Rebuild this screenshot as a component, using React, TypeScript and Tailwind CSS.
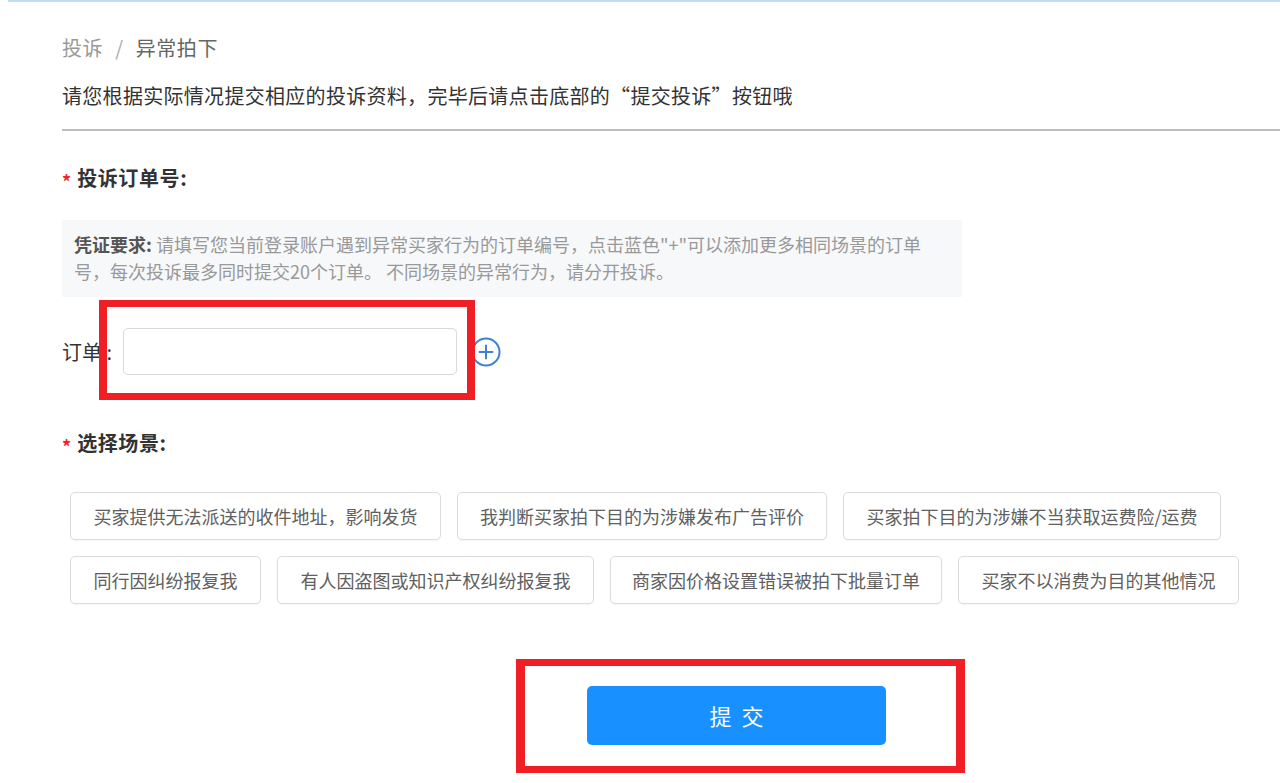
const scenes: { label: string; width: string }[] = [
  { label: "买家提供无法派送的收件地址，影响发货", width: "w-[371px]" },
  { label: "我判断买家拍下目的为涉嫌发布广告评价", width: "w-[370px]" },
  { label: "买家拍下目的为涉嫌不当获取运费险/运费", width: "w-[378px]" },
  { label: "同行因纠纷报复我", width: "w-[191px]" },
  { label: "有人因盗图或知识产权纠纷报复我", width: "w-[317px]" },
  { label: "商家因价格设置错误被拍下批量订单", width: "w-[332px]" },
  { label: "买家不以消费为目的其他情况", width: "w-[281px]" },
];

function FieldLabel({ text }: { text: string }) {
  return (
    <div className="flex h-[28px] items-center">
      <span className="mr-[6px] mt-[5px] text-[18px] font-bold leading-none text-[#f5222d]">*</span>
      <span className="text-[20px] font-bold tracking-[0.6px] text-[#333]">{text}</span>
    </div>
  );
}

function PlusCircle() {
  return (
    <svg width="30" height="30" viewBox="0 0 30 30" fill="none">
      <circle cx="15" cy="15" r="13.5" stroke="#3f82d2" strokeWidth="2" />
      <path d="M15 8.5v13M8.5 15h13" stroke="#3f82d2" strokeWidth="2" strokeLinecap="round" />
    </svg>
  );
}

export default function App() {
  return (
    <div
      className="relative h-[783px] w-[1280px] overflow-hidden bg-white"
      style={{ fontFamily: '"Noto Sans CJK SC", "Microsoft YaHei", sans-serif' }}
    >
      <div className="ml-2 h-[2px] bg-[#bcdff3]" />

      <div className="pl-[62px]">
        <div className="mt-[32px] flex h-[28px] items-center text-[20px] tracking-[0.6px]">
          <span className="text-[#999]">投诉</span>
          <span className="mx-3 text-[#aaa]">/</span>
          <span className="text-[#666]">异常拍下</span>
        </div>

        <p className="mt-[20px] h-[28px] text-[20px] leading-[28px] tracking-[0.3px] text-[#333]">
          请您根据实际情况提交相应的投诉资料，完毕后请点击底部的“提交投诉”按钮哦
        </p>

        <div className="mt-[19px] h-[2px] bg-[#bdbdbd]" />

        <div className="mt-[33px]">
          <FieldLabel text="投诉订单号:" />
        </div>

        <div className="mt-[28px] h-[77px] w-[900px] bg-[#f7f8fa] px-3 py-[11px] text-[18px] leading-[27px] text-[#999]">
          <span className="font-bold text-[#555]">凭证要求:</span> 请填写您当前登录账户遇到异常买家行为的订单编号，点击蓝色"+"可以添加更多相同场景的订单
          <br />
          号，每次投诉最多同时提交20个订单。 不同场景的异常行为，请分开投诉。
        </div>

        <div className="mt-[31px] flex h-[47px] items-center">
          <span className="w-[61px] text-[20px] text-[#333]">订单 :</span>
          <input
            type="text"
            className="h-[47px] w-[334px] rounded-[5px] border border-[#d9d9d9] bg-white px-3 text-[18px] outline-none"
          />
          <span className="ml-[14px] flex items-center">
            <PlusCircle />
          </span>
        </div>

        <div className="mt-[54px]">
          <FieldLabel text="选择场景:" />
        </div>

        <div className="mt-[35px] flex flex-wrap gap-4 pl-2">
          {scenes.map((scene) => (
            <button
              key={scene.label}
              className={`${scene.width} h-[48px] rounded-[5px] border border-[#dcdcdc] bg-white text-center text-[18px] text-[#606060] shadow-[0_1px_2px_rgba(0,0,0,0.04)]`}
            >
              {scene.label}
            </button>
          ))}
        </div>

        <button className="ml-[525px] mt-[82px] flex h-[59px] w-[299px] items-center justify-center gap-[10px] rounded-[5px] bg-[#1890ff] text-[22px] text-white">
          <span>提</span>
          <span>交</span>
        </button>
      </div>

      {/* annotation boxes drawn over the form */}
      <div className="pointer-events-none absolute left-[99px] top-[300px] h-[100px] w-[376px] border-[7px] border-x-[8px] border-[#f01f26]" />
      <div className="pointer-events-none absolute left-[516px] top-[659px] h-[114px] w-[449px] border-[7px] border-x-[9px] border-[#f01f26]" />
    </div>
  );
}
